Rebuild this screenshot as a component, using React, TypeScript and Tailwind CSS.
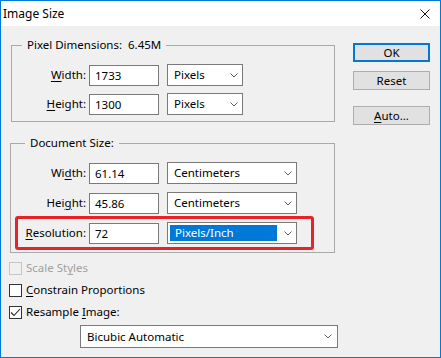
import React from "react";

function Chevron() {
  return (
    <svg width="8" height="5" viewBox="0 0 8 5" className="shrink-0">
      <polyline points="0.5,0.5 4,4 7.5,0.5" fill="none" stroke="#5c5c5c" strokeWidth="1" />
    </svg>
  );
}

function TextBox({ value }: { value: string }) {
  return (
    <div className="ml-[3px] h-[21px] w-[70px] border border-[#7a7a7a] bg-white pl-[5px] leading-[19px] text-black">
      {value}
    </div>
  );
}

function Dropdown({
  value,
  width,
  selected = false,
}: {
  value: string;
  width: string;
  selected?: boolean;
}) {
  return (
    <div
      className={`ml-[8px] flex h-[22px] items-center justify-between border border-[#7a7a7a] bg-white pr-[4px] ${width}`}
    >
      {selected ? (
        <span className="ml-[2px] h-[16px] w-[107px] bg-[#0078d7] pl-[5px] leading-[16px] text-white">
          {value}
        </span>
      ) : (
        <span className="pl-[6px] leading-[20px] text-black">{value}</span>
      )}
      <Chevron />
    </div>
  );
}

function Label({ children, width }: { children: React.ReactNode; width: string }) {
  return <div className={`text-right text-black ${width}`}>{children}</div>;
}

function Check({ checked = false, disabled = false }: { checked?: boolean; disabled?: boolean }) {
  return (
    <div
      className={`flex h-[13px] w-[13px] shrink-0 items-center justify-center border ${
        disabled ? "border-[#c6c6c6] bg-[#f0f0f0]" : "border-[#333333] bg-white"
      }`}
    >
      {checked && (
        <svg width="11" height="11" viewBox="0 0 11 11">
          <polyline points="1,5.5 4,8.5 10,2" fill="none" stroke="#222" strokeWidth="1.1" />
        </svg>
      )}
    </div>
  );
}

function Btn({ children, primary = false, className = "" }: { children: React.ReactNode; primary?: boolean; className?: string }) {
  return (
    <div
      className={`flex h-[19px] w-[77px] items-center justify-center bg-[#e1e1e1] text-black ${
        primary ? "border-2 border-[#0078d7]" : "border border-[#adadad]"
      } ${className}`}
    >
      {children}
    </div>
  );
}

export default function App() {
  return (
    <div className="flex h-[358px] w-[441px] flex-col border border-[#0078d7] bg-[#f0f0f0] font-['Noto_Sans',sans-serif] text-[11.5px] leading-[16px] text-black">
      {/* title bar */}
      <div className="flex h-[25px] shrink-0 items-center justify-between bg-white pl-[2px] pr-[10px]">
        <span className="text-[12px]">Image Size</span>
        <svg width="10" height="10" viewBox="0 0 10 10">
          <line x1="0.5" y1="0.5" x2="9.5" y2="9.5" stroke="#111" strokeWidth="1" />
          <line x1="9.5" y1="0.5" x2="0.5" y2="9.5" stroke="#111" strokeWidth="1" />
        </svg>
      </div>

      <div className="flex flex-1">
        {/* left column */}
        <div className="flex w-[334px] flex-col">
          <fieldset className="ml-[10px] mt-[11px] w-[324px] border border-[#a9a9a9] pb-[6px] pt-[11px]">
            <legend className="ml-[10px] whitespace-pre px-[5px] leading-[16px]">Pixel Dimensions:  6.45M</legend>
            <div className="flex flex-col gap-[7px]">
              <div className="flex h-[22px] items-center">
                <Label width="w-[74px]">
                  <span className="underline underline-offset-2">W</span>idth:
                </Label>
                <TextBox value="1733" />
                <Dropdown value="Pixels" width="w-[76px]" />
              </div>
              <div className="flex h-[22px] items-center">
                <Label width="w-[74px]">
                  <span className="underline underline-offset-2">H</span>eight:
                </Label>
                <TextBox value="1300" />
                <Dropdown value="Pixels" width="w-[76px]" />
              </div>
            </div>
          </fieldset>

          <fieldset className="ml-[9px] mt-[13px] w-[325px] border border-[#a9a9a9] pb-[8px] pt-[11px]">
            <legend className="ml-[14px] px-[5px] leading-[16px]">Document Size:</legend>
            <div className="flex flex-col gap-[8px]">
              <div className="flex h-[22px] items-center">
                <Label width="w-[75px]">
                  Wi<span className="underline underline-offset-2">d</span>th:
                </Label>
                <TextBox value="61.14" />
                <Dropdown value="Centimeters" width="w-[130px]" />
              </div>
              <div className="flex h-[22px] items-center">
                <Label width="w-[75px]">
                  Hei<span className="underline underline-offset-2">g</span>ht:
                </Label>
                <TextBox value="45.86" />
                <Dropdown value="Centimeters" width="w-[130px]" />
              </div>
              <div className="relative flex h-[22px] items-center">
                <Label width="w-[75px]">
                  <span className="underline underline-offset-2">R</span>esolution:
                </Label>
                <TextBox value="72" />
                <Dropdown value="Pixels/Inch" width="w-[130px]" selected />
                <span className="pointer-events-none absolute left-[4px] top-[-6px] h-[34px] w-[299px] rounded-[3px] border-[3px] border-[#e7232a]" />
              </div>
            </div>
          </fieldset>

          <div className="ml-[8px] mt-[7px] flex flex-col gap-[6px]">
            <div className="flex h-[16px] items-center gap-[4px] text-[#a0a0a0]">
              <Check disabled />
              <span>
                Scale St<span className="underline underline-offset-2">y</span>les
              </span>
            </div>
            <div className="flex h-[16px] items-center gap-[4px]">
              <Check />
              <span>
                <span className="underline underline-offset-2">C</span>onstrain Proportions
              </span>
            </div>
            <div className="flex h-[16px] items-center gap-[4px]">
              <Check checked />
              <span>
                Resample <span className="underline underline-offset-2">I</span>mage:
              </span>
            </div>
          </div>

          <div className="ml-[79px] mt-[5px] flex h-[23px] w-[258px] items-center justify-between border border-[#7a7a7a] bg-white pl-[6px] pr-[5px]">
            <span>Bicubic Automatic</span>
            <Chevron />
          </div>
        </div>

        {/* right column */}
        <div className="ml-[18px] flex flex-col pt-[17px]">
          <Btn primary>OK</Btn>
          <Btn className="mt-[9px]">Reset</Btn>
          <Btn className="mt-[16px]">
            <span>
              <span className="underline underline-offset-2">A</span>uto...
            </span>
          </Btn>
        </div>
      </div>
    </div>
  );
}
